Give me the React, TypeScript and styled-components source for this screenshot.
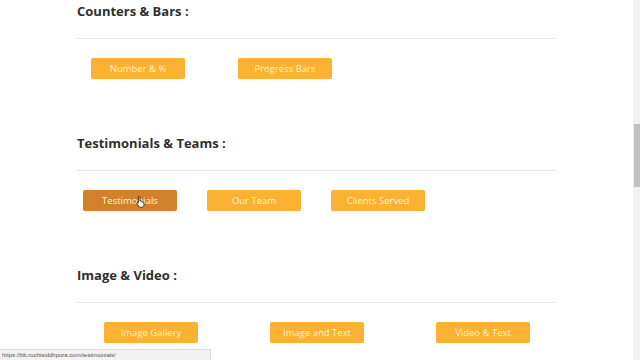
import React from "react";
import styled, { createGlobalStyle } from "styled-components";

const Global = createGlobalStyle`
  html, body { margin: 0; padding: 0; background: #ffffff; overflow: hidden; }
  body { font-family: "Open Sans", "Liberation Sans", sans-serif; }
`;

const Page = styled.div`
  width: 640px;
  height: 360px;
  position: relative;
  overflow: hidden;
  background: #fff;
`;

const Content = styled.main`
  padding: 2px 0 0 77px;
  width: 479px;
  display: flex;
  flex-direction: column;
  gap: 55.5px;
`;

const Section = styled.section`
  display: flex;
  flex-direction: column;
`;

const Heading = styled.h2`
  margin: 0;
  height: 18px;
  line-height: 18px;
  font-size: 13px;
  font-weight: 700;
  color: #2f2f2f;
`;

const Rule = styled.hr`
  margin: 18px 0 0 0;
  border: 0;
  border-top: 1px solid #e6e6e6;
  height: 0;
`;

const ButtonRow = styled.div<{ $pad: number; $gap: number }>`
  display: flex;
  margin-top: 18.5px;
  padding-left: ${(p) => p.$pad}px;
  gap: ${(p) => p.$gap}px;
`;

const Btn = styled.button<{ $active?: boolean }>`
  width: 94px;
  height: 21px;
  border: 0;
  border-radius: 2px;
  padding: 1px 0 0 0;
  background: ${(p) => (p.$active ? "#d1812c" : "#fbb131")};
  color: #fff2d8;
  font-family: "Open Sans", "Liberation Sans", sans-serif;
  font-size: 9.5px;
  line-height: 20px;
  text-align: center;
  box-shadow: 0 1px 1px rgba(0,0,0,0.04);
  position: relative;
`;

const Scrollbar = styled.div`
  position: absolute;
  top: 0;
  right: 0;
  width: 7px;
  height: 360px;
  background: #f1f1f1;
`;

const Thumb = styled.div`
  position: absolute;
  top: 124px;
  left: 1px;
  width: 6px;
  height: 63px;
  background: #c1c1c1;
`;

const Status = styled.div`
  position: absolute;
  left: 0;
  bottom: 0;
  width: 211px;
  height: 11px;
  background: #f2f2f2;
  border-top: 1px solid #dcdcdc;
  border-right: 1px solid #dcdcdc;
  font-family: "Liberation Sans", sans-serif;
  font-size: 6px;
  line-height: 11px;
  color: #555;
  padding-left: 2px;
  box-sizing: border-box;
`;

const Cursor = styled.svg`
  position: absolute;
  left: 136px;
  top: 195px;
`;

const sections = [
  { title: "Counters & Bars :", pad: 14, gap: 53, items: ["Number & %", "Progress Bars"] },
  { title: "Testimonials & Teams :", pad: 6, gap: 30, items: ["Testimonials", "Our Team", "Clients Served"], active: 0 },
  { title: "Image & Video :", pad: 27, gap: 72, items: ["Image Gallery", "Image and Text", "Video & Text"] },
];

export default function App() {
  return (
    <Page>
      <Global />
      <Content>
        {sections.map((s) => (
          <Section key={s.title}>
            <Heading>{s.title}</Heading>
            <Rule />
            <ButtonRow $pad={s.pad} $gap={s.gap}>
              {s.items.map((it, i) => (
                <Btn key={it} $active={s.active === i}>{it}</Btn>
              ))}
            </ButtonRow>
          </Section>
        ))}
      </Content>
      <Cursor width="10" height="13" viewBox="0 0 10 13">
        <path d="M3 1.2c.6 0 1 .4 1 1V6l.3-.1c.5 0 .9.3 1 .7.4-.2 1-.1 1.2.4.4-.2 1 0 1.2.5L8 9.5c0 1.5-1 2.8-2.6 2.8H4.6c-1 0-1.7-.5-2.2-1.3L1 8.6c-.3-.5 0-1 .4-1.1.4-.2.8 0 1 .3V2.2c0-.6.2-1 .6-1z" fill="#fff" stroke="#111" strokeWidth="0.8" />
      </Cursor>
      <Scrollbar>
        <Thumb />
      </Scrollbar>
      <Status>https://bb.ruchisiddhpura.com/testimonials/</Status>
    </Page>
  );
}
